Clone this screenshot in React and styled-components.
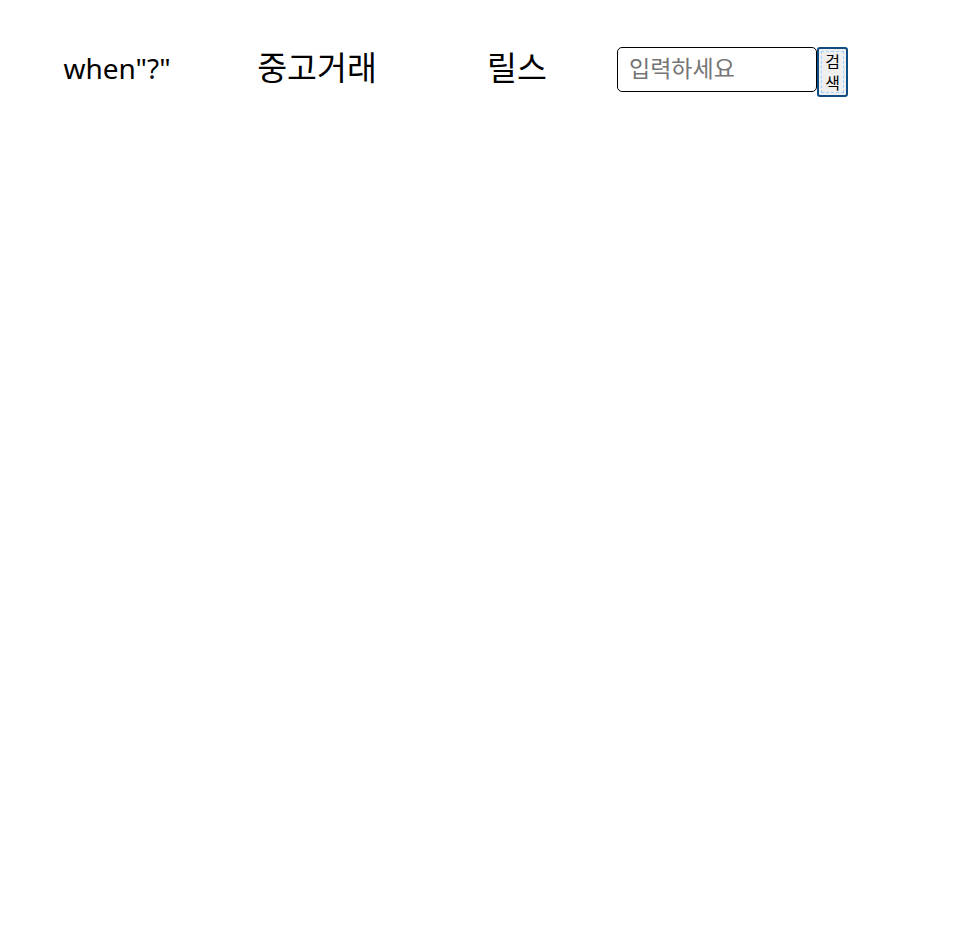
import React from "react";
import styled, { createGlobalStyle } from "styled-components";

const Global = createGlobalStyle`
  html, body { margin: 0; padding: 0; background: #fff; }
  body { font-family: "Noto Sans", "Noto Sans CJK KR", sans-serif; }
`;

const Header = styled.header`
  display: flex;
  align-items: flex-start;
  padding: 47px 0 0 17px;
`;

const NavItem = styled.div`
  width: 200px;
  height: 42px;
  display: flex;
  align-items: center;
  justify-content: center;
  font-size: ${(p) => (p.$korean ? "32.5px" : "28px")};
  line-height: 1;
  color: #000;
  font-family: "Noto Sans", "Noto Sans CJK KR", sans-serif;
`;

const Search = styled.form`
  display: flex;
  align-items: flex-start;
`;

const Input = styled.input`
  box-sizing: border-box;
  width: 200px;
  height: 45px;
  border: 1px solid #000;
  border-radius: 5px;
  padding: 0 11px 5px;
  font-size: 23px;
  font-family: "Noto Sans CJK KR", sans-serif;
  outline: none;
  &::placeholder { color: #757575; }
`;

const Button = styled.button`
  box-sizing: border-box;
  width: 31px;
  height: 50px;
  padding: 1px 2px;
  border: 2px solid #0f4c81;
  border-radius: 3px;
  background: #efefef;
  outline: 1px dashed #9fd4ff;
  outline-offset: -5px;
  font-size: 16px;
  line-height: 21px;
  font-family: "Noto Sans CJK KR", sans-serif;
  color: #000;
  word-break: break-all;
`;

export default function App() {
  return (
    <>
      <Global />
      <Header>
        <NavItem>when"?"</NavItem>
        <NavItem $korean>중고거래</NavItem>
        <NavItem $korean>릴스</NavItem>
        <Search onSubmit={(e) => e.preventDefault()}>
          <Input placeholder="입력하세요" />
          <Button type="submit">검색</Button>
        </Search>
      </Header>
    </>
  );
}
